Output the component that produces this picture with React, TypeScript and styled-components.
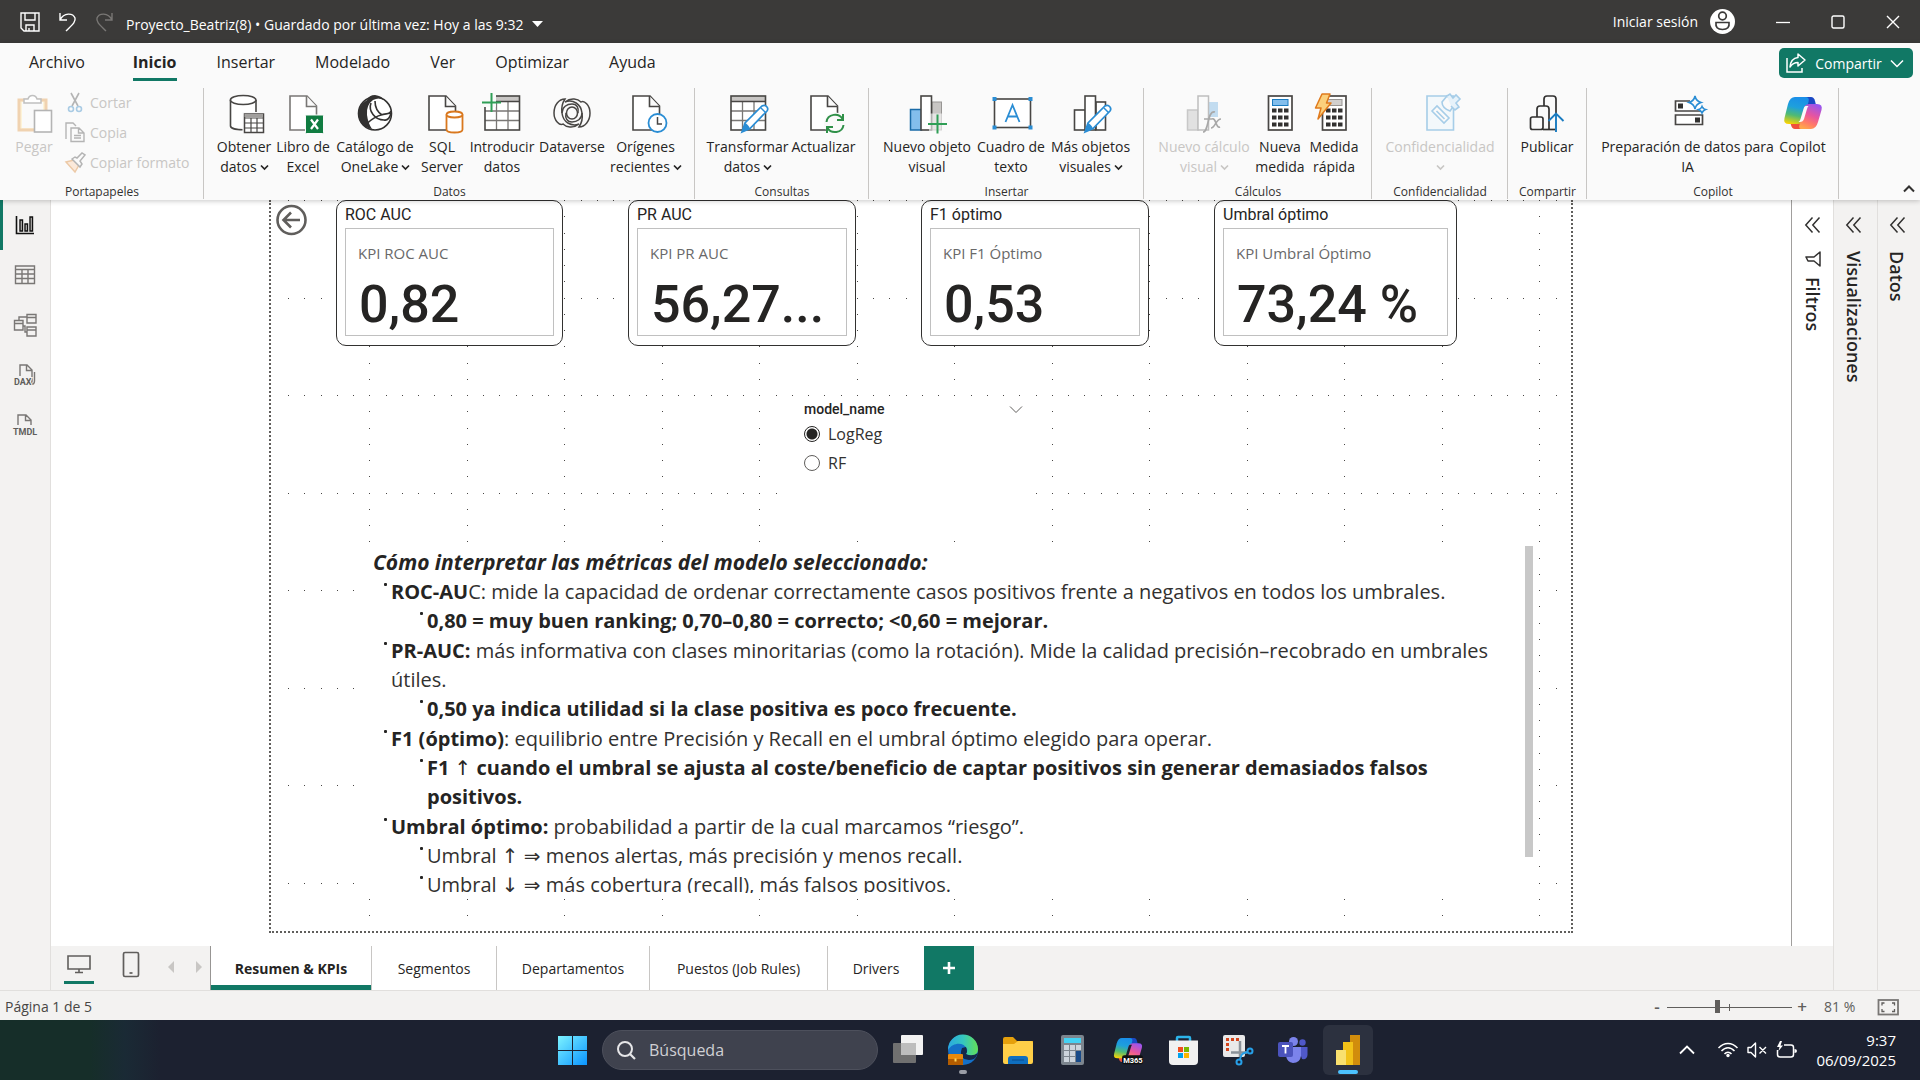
import React from "react";
import styled, { createGlobalStyle, css } from "styled-components";

const ui = `"Open Sans", "Noto Sans", "DejaVu Sans", sans-serif`;
const din = `Roboto, "Liberation Sans", sans-serif`;
const green = "#117865";

const Global = createGlobalStyle`
  *, *::before, *::after { box-sizing: border-box; }
  body { margin: 0; background: #fff; color: #252423; font-family: ${ui}; font-size: 14px; }
  button { font: inherit; color: inherit; background: none; border: 0; padding: 0; margin: 0; }
  svg { display: block; overflow: visible; flex: none; }
`;

const Shell = styled.div`
  min-height: 100vh;
  display: grid;
  grid-template-columns: minmax(0, 1fr);
  grid-template-rows: auto auto 1fr auto auto;
  overflow: hidden;
`;

/* ---------- title bar ---------- */
const TitleBar = styled.header`
  height: 43px;
  background: #3b3a39;
  color: #fff;
  display: flex;
  align-items: center;
  justify-content: space-between;
  padding: 0 20px;
`;
const TitleSide = styled.div<{ $gap: number }>`
  display: flex;
  align-items: center;
  gap: ${(p) => p.$gap}px;
`;
const FileName = styled.button`
  display: flex;
  align-items: center;
  gap: 9px;
  padding-top: 5px;
  white-space: nowrap;
`;
const SignIn = styled.button`
  display: flex;
  align-items: center;
  gap: 12px;
  white-space: nowrap;
`;

/* ---------- ribbon ---------- */
const Ribbon = styled.section`
  background: #fafafa;
  position: relative;
  z-index: 3;
  box-shadow: 0 1px 5px rgba(0, 0, 0, 0.22);
`;
const MenuRow = styled.nav`
  height: 45px;
  display: flex;
  justify-content: space-between;
  align-items: flex-start;
  padding: 0 7px 0 9px;
`;
const MenuTabs = styled.div`
  display: flex;
`;
const MenuTab = styled.button<{ $active?: boolean }>`
  height: 38px;
  padding: 0 20px;
  font-size: 16px;
  line-height: 22px;
  color: #252423;
  ${(p) =>
    p.$active &&
    css`
      font-weight: 700;
      margin-left: 8px;
      &::before {
        content: "";
        display: block;
        height: 8px;
      }
      &::after {
        content: "";
        display: block;
        height: 3px;
        margin: 5px 0 0;
        background: ${green};
      }
    `}
`;
const ShareButton = styled.button`
  height: 30px;
  width: 134px;
  margin-top: 5px;
  border-radius: 5px;
  background: ${green};
  color: #fff;
  display: flex;
  align-items: center;
  justify-content: space-between;
  padding: 0 10px 0 7px;
  font-size: 14px;
`;
const GroupsRow = styled.div`
  display: flex;
  height: 112px;
`;
const Group = styled.section`
  height: 111px;
  display: flex;
  flex-direction: column;
  justify-content: space-between;
  padding: 5px 10px 0 11px;
  border-right: 1px solid #c8c6c4;
`;
const GroupItems = styled.div`
  display: flex;
  align-items: flex-start;
`;
const GroupName = styled.div`
  font-size: 12px;
  line-height: 14px;
  text-align: center;
  color: #323130;
`;
const BigButton = styled.button<{ $w: number; $off?: boolean }>`
  width: ${(p) => p.$w}px;
  display: flex;
  flex-direction: column;
  align-items: center;
  gap: 4px;
  font-size: 14px;
  line-height: 20px;
  white-space: nowrap;
  color: ${(p) => (p.$off ? "#c8c6c4" : "#252423")};
`;
const LabelLine = styled.span`
  display: flex;
  align-items: center;
  justify-content: center;
  gap: 4px;
  height: 20px;
`;
const Labels = styled.span`
  display: block;
`;
const SmallList = styled.div`
  display: flex;
  flex-direction: column;
  width: 128px;
  margin: -6px 0 0 8px;
`;
const SmallButton = styled.button`
  height: 30px;
  display: flex;
  align-items: center;
  gap: 4px;
  color: #c8c6c4;
  white-space: nowrap;
`;
const CollapseCell = styled.div`
  flex: 1;
  display: flex;
  justify-content: flex-end;
  align-items: flex-end;
  padding: 0 6px 8px 0;
`;

/* ---------- workspace ---------- */
const Workspace = styled.main`
  display: flex;
  min-height: 0;
`;
const Rail = styled.nav`
  width: 51px;
  background: #f3f2f1;
  border-right: 1px solid #e1dfdd;
  display: flex;
  flex-direction: column;
`;
const RailButton = styled.button<{ $active?: boolean }>`
  height: 50px;
  display: grid;
  place-items: center;
  border-left: 3px solid ${(p) => (p.$active ? green : "transparent")};
  padding-right: 3px;
`;
const Center = styled.div`
  flex: 1;
  min-width: 0;
  display: flex;
  flex-direction: column;
`;
const CanvasRow = styled.div`
  flex: 1;
  display: flex;
`;
const CanvasArea = styled.div`
  flex: 1;
  min-width: 0;
  display: flex;
  justify-content: center;
  align-items: flex-start;
  overflow: hidden;
`;
const Pane = styled.aside<{ $w: number; $docked?: boolean }>`
  width: ${(p) => p.$w}px;
  border-left: 1px solid ${(p) => (p.$docked ? "#e1dfdd" : "#a19f9d")};
  background: ${(p) => (p.$docked ? "#f3f2f1" : "#fff")};
  display: flex;
  flex-direction: column;
  align-items: center;
  padding: 17px ${(p) => (p.$docked ? 4 : 0)}px 0 0;
  gap: 18px;
`;
const PaneHead = styled.div`
  display: flex;
  flex-direction: column;
  align-items: center;
  gap: 10px;
`;
const PaneTitle = styled.h2`
  margin: 0;
  writing-mode: vertical-rl;
  font-size: 18px;
  line-height: 24px;
  font-weight: 600;
  color: #252423;
`;

/* ---------- report page ---------- */
const Page = styled.article`
  position: relative;
  flex: none;
  width: 1304px;
  height: 733px;
  border: 2px dotted #605e5c;
  border-top: 0;
  background: #fff;
`;
const DotGrid = styled.svg`
  position: absolute;
  left: 0;
  top: 0;
`;
const PageBody = styled.div`
  position: relative;
`;
const CardsRow = styled.div`
  display: flex;
  align-items: flex-start;
  gap: 65px;
  padding-left: 5px;
`;
const BackButton = styled.button`
  margin: 4px -36px 0 0;
`;
const Card = styled.section<{ $w: number }>`
  width: ${(p) => p.$w}px;
  height: 146px;
  border: 1px solid #323130;
  border-radius: 10px;
  background: #fff;
  padding: 3px 8px 9px;
  display: flex;
  flex-direction: column;
`;
const CardTitle = styled.h3`
  margin: 0;
  font: 400 16px/22px ${din};
  padding-bottom: 2px;
`;
const CardInner = styled.div`
  flex: 1;
  border: 1px solid #c0c0c0;
  padding: 14px 12px 0;
`;
const CardLabel = styled.div`
  font-size: 15px;
  line-height: 20px;
  color: #696969;
`;
const CardValue = styled.div`
  font: 500 52px/60px ${din};
  padding: 12px 0 0 1px;
  color: #252423;
  white-space: nowrap;
`;
const Slicer = styled.fieldset`
  margin: 50px 0 0 509px;
  width: 254px;
  height: 145px;
  border: 0;
  background: #fff;
  padding: 3px 12px 0 24px;
  min-width: 0;
`;
const SlicerHead = styled.div`
  display: flex;
  justify-content: space-between;
  align-items: center;
  font: 500 14px/20px ${din};
`;
const Option = styled.label`
  display: flex;
  align-items: center;
  gap: 8px;
  height: 29px;
  font-size: 16px;
  color: #323130;
`;
const Radio = styled.input`
  appearance: none;
  width: 16px;
  height: 16px;
  margin: 0;
  border: 1px solid #605e5c;
  border-radius: 50%;
  background: #fff;
  &:checked {
    border-color: #252423;
    background: radial-gradient(circle, #252423 5px, #fff 6px);
  }
`;
const TextVisual = styled.section`
  display: flex;
  justify-content: space-between;
  margin: 1px 0 0 91px;
  width: 1174px;
  height: 355px;
  background: #fff;
  padding: 4px 3px 4px 11px;
`;
const TextClip = styled.div`
  flex: 1;
  height: 347px;
  overflow: hidden;
  font-size: 20px;
  line-height: 29px;
  color: #323130;
  b { color: #252423; }
`;
const Thin = styled.span`
  font-weight: 400;
`;
const TextHeading = styled.h3`
  margin: 0;
  padding-top: 2px;
  font-size: 21px;
  line-height: 29px;
  font-style: italic;
  font-weight: 700;
  color: #252423;
`;
const Bullets = styled.ul<{ $nested?: boolean }>`
  list-style: none;
  margin: 0;
  padding: ${(p) => (p.$nested ? "0 0 1px 36px" : "0 0 0 11px")};
`;
const Bullet = styled.li`
  display: grid;
  grid-template-columns: 7px minmax(0, 1fr);
  &::before {
    content: "";
    width: 3px;
    height: 3px;
    margin-top: 6px;
    border-radius: 1px;
    background: #252423;
  }
`;
const ScrollThumb = styled.div`
  width: 8px;
  height: 311px;
  background: #c8c8c8;
`;

/* ---------- page tabs ---------- */
const PageTabs = styled.nav`
  height: 44px;
  background: #f3f2f1;
  display: flex;
`;
const ViewSwitch = styled.div`
  width: 159px;
  display: flex;
  align-items: flex-start;
  padding: 5px 8px 0 13px;
  justify-content: space-between;
`;
const ViewButton = styled.button<{ $active?: boolean }>`
  width: 30px;
  height: 33px;
  display: flex;
  justify-content: center;
  border-bottom: 3px solid ${(p) => (p.$active ? green : "transparent")};
`;
const Arrow = styled.button`
  padding-top: 10px;
`;
const PageTab = styled.button<{ $w: number; $active?: boolean }>`
  width: ${(p) => p.$w}px;
  background: #fff;
  border-left: 1px solid ${(p) => (p.$active ? "#979593" : "#c8c6c4")};
  font-size: 14px;
  font-weight: ${(p) => (p.$active ? 700 : 400)};
  box-shadow: ${(p) => (p.$active ? `inset 0 -5px 0 ${green}` : "none")};
  white-space: nowrap;
`;
const AddTab = styled.button`
  width: 50px;
  background: ${green};
  display: grid;
  place-items: center;
`;

/* ---------- status bar ---------- */
const StatusBar = styled.footer`
  height: 30px;
  background: #f3f2f1;
  border-top: 1px solid #e1dfdd;
  display: flex;
  justify-content: space-between;
  align-items: center;
  padding: 2px 22px 0 5px;
  color: #484644;
`;
const ZoomBox = styled.div`
  display: flex;
  align-items: center;
  color: #605e5c;
`;
const ZoomStep = styled.button`
  width: 20px;
  font-size: 17px;
  line-height: 20px;
  font-weight: 600;
`;
const ZoomRange = styled.input`
  appearance: none;
  width: 125px;
  height: 14px;
  margin: 0;
  background:
    linear-gradient(#605e5c, #605e5c) 62px 4px / 1px 7px no-repeat,
    linear-gradient(#605e5c, #605e5c) 0 7px / 100% 1px no-repeat;
  &::-webkit-slider-thumb {
    appearance: none;
    width: 5px;
    height: 13px;
    background: #605e5c;
  }
`;
const ZoomText = styled.span`
  width: 56px;
  padding: 0 0 1px 12px;
  white-space: nowrap;
`;
const FitButton = styled.button`
  margin-left: 10px;
`;

/* ---------- taskbar ---------- */
const Taskbar = styled.footer`
  height: 60px;
  background: linear-gradient(90deg, #162e29 0, #162e29 90px, #1a2a35 125px, #1c2130 160px, #1c2130 100%);
  display: grid;
  grid-template-columns: 1fr auto 1fr;
  align-items: center;
  color: #fff;
`;
const Dock = styled.div`
  grid-column: 2;
  display: flex;
  align-items: center;
  gap: 5px;
`;
const DockButton = styled.button<{ $active?: boolean }>`
  width: 50px;
  height: 50px;
  border-radius: 6px;
  display: grid;
  place-items: center;
  background: ${(p) => (p.$active ? "#2c313f" : "none")};
`;
const DockMark = styled.span<{ $w: number; $c: string }>`
  width: ${(p) => p.$w}px;
  height: 4px;
  margin-bottom: -8px;
  border-radius: 2px;
  background: ${(p) => p.$c};
`;
const DockStack = styled.span`
  display: flex;
  flex-direction: column;
  align-items: center;
  gap: 5px;
`;
const SearchBox = styled.label`
  width: 276px;
  height: 40px;
  border-radius: 20px;
  border: 1px solid #4d505c;
  background: #3f424e;
  display: flex;
  align-items: center;
  gap: 14px;
  padding: 0 14px;
`;
const SearchInput = styled.input`
  flex: 1;
  min-width: 0;
  border: 0;
  outline: 0;
  background: none;
  font: 400 16px/22px ${ui};
  color: #fff;
  padding: 0;
  &::placeholder { color: #d0d0d4; opacity: 1; }
`;
const Tray = styled.div`
  display: flex;
  align-items: center;
  justify-content: flex-end;
  padding-right: 24px;
`;
const TrayIcons = styled.div`
  display: flex;
  align-items: center;
  gap: 9px;
  margin: 0 19px 0 24px;
`;
const Clock = styled.div`
  font-size: 15px;
  line-height: 20px;
  text-align: right;
`;

/* ---------- icons ---------- */
const ink = "#484644";
const blue = "#2a8dd4";

const Svg = ({ s = 40, h, children }: { s?: number; h?: number; children: React.ReactNode }) => (
  <svg width={s} height={h ?? s} viewBox={`0 0 ${s} ${h ?? s}`} fill="none" aria-hidden="true">
    {children}
  </svg>
);
const Doc = ({ c = ink }: { c?: string }) => (
  <>
    <path d="M7 3H24L33.500 13V37H7Z" fill="#fff" stroke={c} strokeWidth="1.600" />
    <path d="M23.500 3V13.500H33.500" fill="#fafafa" stroke={c} strokeWidth="1.600" />
  </>
);
const Table = () => (
  <>
    <rect x="3" y="3" width="34.500" height="34" fill="#fff" />
    <rect x="3" y="3" width="34.500" height="5.500" fill="#c8c6c4" />
    <path d="M3 18H37M3 27.500H37M14.500 9V37M26 9V37" stroke="#797775" strokeWidth="1.300" />
    <rect x="3" y="3" width="34.500" height="34" stroke={ink} strokeWidth="1.600" />
    <path d="M3 8.500H37" stroke={ink} strokeWidth="1.300" />
  </>
);
const Pencil = () => (
  <>
    <path d="M14 39L17 30L34 13Q37 11.500 39 14Q40.500 16 39 18L22 35.500Z" fill="#fff" stroke={blue} strokeWidth="1.700" />
    <path d="M14 39L17 30Q20 31 22 35.500Z" fill={blue} />
    <path d="M33 15L37.500 19.500" stroke={blue} strokeWidth="1.500" />
  </>
);
const Plus = ({ x, y }: { x: number; y: number }) => (
  <path d={`M${x - 9.5} ${y}H${x + 9.5}M${x} ${y - 9.5}V${y + 9.5}`} stroke="#2f9e56" strokeWidth="2" />
);
const Calc = ({ top = "#83beec" }: { top?: string }) => (
  <>
    <rect x="8.500" y="3" width="23.500" height="34" fill="#fff" stroke={ink} strokeWidth="1.700" />
    <rect x="12.500" y="6.500" width="15.500" height="6" fill={top} stroke={top === "#83beec" ? "#1a7bc0" : "#979593"} />
    {[15.5, 22.5, 29.5].map((y) =>
      [12, 18, 24].map((cx) => <rect key={`${cx}-${y}`} x={cx} y={y} width="4.500" height="4" fill="#323130" />)
    )}
  </>
);

const Copilot = ({ id, hole }: { id: string; hole: string }) => (
  <>
    <defs>
      <linearGradient id={`${id}a`} x1="0.400" y1="0" x2="0.200" y2="1">
        <stop offset="0" stopColor="#1a8fe8" />
        <stop offset="0.350" stopColor="#1ea0dc" />
        <stop offset="0.650" stopColor="#4fba74" />
        <stop offset="1" stopColor="#ffd400" />
      </linearGradient>
      <linearGradient id={`${id}b`} x1="0.700" y1="0" x2="0.300" y2="1">
        <stop offset="0" stopColor="#9a55ee" />
        <stop offset="0.450" stopColor="#e8559e" />
        <stop offset="0.750" stopColor="#ff7a68" />
        <stop offset="1" stopColor="#ffa54c" />
      </linearGradient>
    </defs>
    <path d="M20 4H28Q31 4 32 8L33.500 14H25Z" fill="#1b49c4" />
    <path d="M20 36H12Q9 36 8 32L6.500 27H15Z" fill="#f0503c" />
    <path d="M12 4H22Q27 4 25.500 9L20 27Q18.500 31 14 31H6Q0 31 1.500 25L5 11Q7 4 12 4Z" fill={`url(#${id}a)`} />
    <path d="M28 36H18Q15 36 17 30L21 15Q22 11 27 11H34Q40 11 38.500 17L35 29Q33 36 28 36Z" fill={`url(#${id}b)`} />
    <path d="M22.500 13H25.500Q24.500 14 24 16L21 26Q20 29 17 29H15.500Q17 28 17.500 26L20.500 16Q21 13.500 22.500 13Z" fill={hole} />
  </>
);

const Icons = {
  get: (
    <Svg>
      <path d="M6.500 7V33C6.500 38 32 38 32 33V7" fill="#fff" stroke={ink} strokeWidth="1.600" />
      <ellipse cx="19.200" cy="7" rx="12.800" ry="4.500" fill="#fff" stroke={ink} strokeWidth="1.600" />
      <rect x="18.500" y="19" width="23" height="22" fill="#fafafa" />
      <rect x="20.500" y="21" width="19" height="18.500" fill="#fff" stroke={ink} strokeWidth="1.500" />
      <path d="M20.500 22.500H39" stroke="#a19f9d" strokeWidth="3" />
      <path d="M20.500 25H39M20.500 30H39M20.500 35H39M27 25V39M33 25V39" stroke={ink} strokeWidth="1.200" />
    </Svg>
  ),
  excel: (
    <Svg>
      <Doc c="#797775" />
      <rect x="22.500" y="22" width="18" height="18.500" rx="1" fill="#107c41" stroke="#fafafa" />
      <path d="M28 26.500L35 36M35 26.500L28 36" stroke="#fff" strokeWidth="2.200" />
    </Svg>
  ),
  lake: (
    <Svg>
      <circle cx="20" cy="20.500" r="16.500" fill="#fff" stroke="#323130" strokeWidth="1.600" />
      <path d="M12 7Q14 2 20 2Q27 3 29 7Q24 4 18 7Q11 12 12 22Q13 30 17 36Q4 34 3.500 21Q3.500 12 12 7Z" fill="#323130" />
      <path d="M16 10C13 18 20 27 29 27C33 28 35 24 36 20M9 33C15 28 18 24 26 22C31 20 35 22 36 18M20 8C20 15 24 20 27 22" stroke="#323130" strokeWidth="1.600" />
    </Svg>
  ),
  sql: (
    <Svg>
      <Doc />
      <path d="M24.500 21.500V36.500C24.500 40.500 40.500 40.500 40.500 36.500V21.500" fill="#fff" stroke="#d9781e" strokeWidth="1.800" />
      <ellipse cx="32.500" cy="21.500" rx="8" ry="3" fill="#fff" stroke="#d9781e" strokeWidth="1.800" />
    </Svg>
  ),
  enter: (
    <Svg>
      <Table />
      <path d="M0 0H14V14H0Z" fill="#fafafa" />
      <Plus x={9.5} y={9.5} />
    </Svg>
  ),
  verse: (
    <Svg>
      <g stroke={ink} strokeWidth="1.500">
        <ellipse cx="20" cy="20" rx="5.500" ry="6" />
        <path d="M2 20C2 12 7 6 13 6C11 9 9 14 10 20C11 29 19 34 27 31C21 36 14 34 11 31C8 33 2 28 2 20Z" />
        <path d="M38 20C38 28 33 34 27 34C29 31 31 26 30 20C29 11 21 6 13 9C19 4 26 6 29 9C32 7 38 12 38 20Z" />
        <path d="M10 20C10 14 15 11 20 11C25 11 27 15 26 20M30 20C30 26 25 29 20 29C15 29 13 25 14 20" />
      </g>
    </Svg>
  ),
  recent: (
    <Svg>
      <Doc />
      <circle cx="31.500" cy="30" r="9" fill="#fff" stroke={blue} strokeWidth="1.800" />
      <path d="M31.500 24V31H36" stroke={ink} strokeWidth="1.500" />
    </Svg>
  ),
  transform: (
    <Svg>
      <Table />
      <Pencil />
    </Svg>
  ),
  refresh: (
    <Svg>
      <Doc />
      <circle cx="31" cy="30.500" r="11" fill="#fafafa" />
      <g stroke="#2f9048" strokeWidth="2">
        <path d="M22.500 29C23.500 20.500 35 19.500 38.500 26M39 21V27H33" />
        <path d="M39.500 32C38.500 40.500 27 41 23.500 35M23 40V34H29" />
      </g>
    </Svg>
  ),
  visual: (
    <Svg>
      <rect x="25" y="9" width="9.500" height="28" fill="#c8c6c4" stroke="#979593" />
      <rect x="3.500" y="16.500" width="11" height="20.500" fill="#83beec" stroke="#1a6ba8" strokeWidth="1.500" />
      <rect x="14" y="3" width="10.500" height="34" fill="#fff" stroke={ink} strokeWidth="1.600" />
      <rect x="22" y="20.500" width="18" height="18" fill="#fafafa" opacity="0.600" />
      <Plus x={30.5} y={31} />
    </Svg>
  ),
  textbox: (
    <Svg>
      <rect x="3.500" y="6" width="36" height="28.500" fill="#fff" stroke={ink} strokeWidth="1.600" />
      {[[3.5, 6], [39.5, 6], [3.5, 34.5], [39.5, 34.5]].map(([x, y]) => (
        <rect key={`${x}-${y}`} x={x - 2} y={y - 2} width="4" height="4" fill={blue} />
      ))}
      <path d="M14.500 29L21.500 12L28.500 29M17 23.500H26" stroke={blue} strokeWidth="1.800" />
    </Svg>
  ),
  more: (
    <Svg>
      <rect x="25" y="9" width="9.500" height="28" fill="#fff" stroke={ink} strokeWidth="1.600" />
      <rect x="3.500" y="17" width="11" height="20" fill="#fff" stroke={ink} strokeWidth="1.600" />
      <rect x="14" y="3" width="10.500" height="34" fill="#fff" stroke={ink} strokeWidth="1.600" />
      <Pencil />
    </Svg>
  ),
  newCalc: (
    <Svg>
      <rect x="24" y="9" width="10" height="15" fill="#c2dcf0" />
      <rect x="3.500" y="17" width="10.500" height="20" fill="#e1e1e1" stroke="#c8c8c8" strokeWidth="1.500" />
      <rect x="14" y="3" width="10.500" height="34" fill="#fafafa" stroke="#bebebe" strokeWidth="1.500" />
      <path d="M19 39C25 39 23 17 31 19M20 26H28M28 26C32 24 32 36 36 34M37 26C32 26 31 35 27 35" stroke="#a8a8a8" strokeWidth="1.700" />
    </Svg>
  ),
  measure: (
    <Svg>
      <Calc />
    </Svg>
  ),
  quick: (
    <Svg>
      <Calc top="#d2d0ce" />
      <path d="M8 1H16L12.500 10H17L4 26L7 15H1.500Z" fill="#fbd07c" stroke="#e07a1c" strokeWidth="1.500" strokeLinejoin="round" />
    </Svg>
  ),
  label: (
    <Svg>
      <g stroke="#a6cde8" strokeWidth="1.600">
        <path d="M7 3H33.500V37H7Z" fill="#f3f8fb" />
        <path d="M12 18L17 13L29 25L24 30ZM16.500 18L24.500 26" fill="#fafafa" />
        <path d="M22 9L27 3L35 11L30 18Q22 15 22 9Z" fill="#fafafa" />
        <path d="M27 3L30 1L33 5L36 2L40 6L36 10L39 14L35 17L31 13" fill="#e6f2fa" />
      </g>
    </Svg>
  ),
  publish: (
    <Svg>
      <g stroke="#323130" strokeWidth="1.700" fill="#fafafa">
        <path d="M17 13V6Q17 3 20 3H26Q29 3 29 6V20" />
        <path d="M10 24V16Q10 13 13 13H19Q22 13 22 16V36" />
        <rect x="3.500" y="24" width="12.500" height="12.500" rx="2" />
        <path d="M16 36.500H28" />
      </g>
      <path d="M29 39V21M21.500 28L29 20.500L36.500 28" stroke="#1a7bc0" strokeWidth="1.900" />
    </Svg>
  ),
  prep: (
    <Svg>
      <path d="M22 8H7.500V18H34.500V14M7.500 22H34.500V31.500H7.500Z" fill="#fff" stroke={ink} strokeWidth="1.700" />
      <rect x="10" y="10.500" width="5" height="5" fill="#323130" />
      <rect x="27" y="24.500" width="5" height="5" fill="#323130" />
      <path d="M27 3Q28 8 33 9.500Q28 11 27 16Q26 11 21 9.500Q26 8 27 3ZM34 13.500Q35 16 37.500 16.500Q35 17.500 34 20Q33 17.500 30.500 16.500Q33 16 34 13.500Z" fill="#fafafa" stroke="#2a8dd4" strokeWidth="1.600" />
    </Svg>
  ),
  copilot: (
    <Svg>
      <Copilot id="rib" hole="#fafafa" />
    </Svg>
  ),
  paste: (
    <Svg>
      <path d="M5 7H32V37H5Z" fill="#fdf3d8" stroke="#f0d2b0" strokeWidth="3" />
      <rect x="8" y="9" width="21" height="26" fill="#fafafa" />
      <path d="M10 10V6H14Q15 2.500 18.500 2.500Q22 2.500 23 6H27V10Z" fill="#fff" stroke="#c0c0c0" strokeWidth="1.500" />
      <rect x="20.500" y="17.500" width="17" height="21.500" fill="#fff" stroke="#b4b4b4" strokeWidth="1.600" />
    </Svg>
  ),
  cut: (
    <Svg s={21}>
      <path d="M6 1L13 14M14 1L7 14" stroke="#b4b4b4" strokeWidth="1.600" />
      <circle cx="6" cy="17" r="2.500" stroke="#a9cbe4" strokeWidth="1.600" />
      <circle cx="14" cy="17" r="2.500" stroke="#a9cbe4" strokeWidth="1.600" />
    </Svg>
  ),
  copy: (
    <Svg s={21}>
      <path d="M1 17V1H8L11 4M6 19.500V6H14L19 11V19.500ZM13.500 6V11H19M9 13.500H16M9 16H16" fill="#fafafa" stroke="#b4b4b4" strokeWidth="1.400" />
    </Svg>
  ),
  brush: (
    <Svg s={21}>
      <path d="M1 10L9 8L14 13L10 20Z" fill="#fbe9da" stroke="#ecc9a6" strokeWidth="1.500" />
      <path d="M7 7L15 15L17 12L15 9L20 3L17 1L12 6L10 5Z" fill="#fafafa" stroke="#b4b4b4" strokeWidth="1.500" />
    </Svg>
  ),
};

const Chevron = ({ w = 7, c = "currentColor", t = 1.7, up = false }: { w?: number; c?: string; t?: number; up?: boolean }) => (
  <svg width={w} height={w / 2 + 1} viewBox={`0 0 ${w} ${w / 2 + 1}`} fill="none" aria-hidden="true">
    <path d={up ? `M0 ${w / 2 + 0.5}L${w / 2} 0.5L${w} ${w / 2 + 0.5}` : `M0 0.5L${w / 2} ${w / 2 + 0.5}L${w} 0.5`} stroke={c} strokeWidth={t} />
  </svg>
);

const DoubleChevron = () => (
  <Svg s={15} h={16}>
    <path d="M7.500 0.500L0.800 8L7.500 15.500M14.500 0.500L7.800 8L14.500 15.500" stroke="#323130" strokeWidth="1.500" />
  </Svg>
);

type Item = { icon: React.ReactNode; lines: string[]; w: number; menu?: boolean; off?: boolean };
const groups: { name: string; items: Item[] }[] = [
  {
    name: "Datos",
    items: [
      { icon: Icons.get, lines: ["Obtener", "datos"], w: 58, menu: true },
      { icon: Icons.excel, lines: ["Libro de", "Excel"], w: 60 },
      { icon: Icons.lake, lines: ["Catálogo de", "OneLake"], w: 84, menu: true },
      { icon: Icons.sql, lines: ["SQL", "Server"], w: 50 },
      { icon: Icons.enter, lines: ["Introducir", "datos"], w: 70 },
      { icon: Icons.verse, lines: ["Dataverse"], w: 70 },
      { icon: Icons.recent, lines: ["Orígenes", "recientes"], w: 77, menu: true },
    ],
  },
  {
    name: "Consultas",
    items: [
      { icon: Icons.transform, lines: ["Transformar", "datos"], w: 83, menu: true },
      { icon: Icons.refresh, lines: ["Actualizar"], w: 69 },
    ],
  },
  {
    name: "Insertar",
    items: [
      { icon: Icons.visual, lines: ["Nuevo objeto", "visual"], w: 94 },
      { icon: Icons.textbox, lines: ["Cuadro de", "texto"], w: 74 },
      { icon: Icons.more, lines: ["Más objetos", "visuales"], w: 85, menu: true },
    ],
  },
  {
    name: "Cálculos",
    items: [
      { icon: Icons.newCalc, lines: ["Nuevo cálculo", "visual"], w: 98, menu: true, off: true },
      { icon: Icons.measure, lines: ["Nueva", "medida"], w: 54 },
      { icon: Icons.quick, lines: ["Medida", "rápida"], w: 54 },
    ],
  },
  { name: "Confidencialidad", items: [{ icon: Icons.label, lines: ["Confidencialidad", ""], w: 114, menu: true, off: true }] },
  { name: "Compartir", items: [{ icon: Icons.publish, lines: ["Publicar"], w: 56 }] },
  {
    name: "Copilot",
    items: [
      { icon: Icons.prep, lines: ["Preparación de datos para", "IA"], w: 179 },
      { icon: Icons.copilot, lines: ["Copilot"], w: 51 },
    ],
  },
];

function RibbonButton({ item }: { item: Item }) {
  const last = item.lines.length - 1;
  return (
    <BigButton $w={item.w} $off={item.off} disabled={item.off}>
      {item.icon}
      <Labels>
        {item.lines.map((line, i) => (
          <LabelLine key={i}>
            {line}
            {item.menu && i === last && <Chevron />}
          </LabelLine>
        ))}
      </Labels>
    </BigButton>
  );
}

function GridDots() {
  const step = 16.25;
  const dots: React.ReactNode[] = [];
  for (let r = 0; r <= 44; r++) {
    for (let c = 0; c <= 78; c++) {
      const onRow = r % 6 === 0;
      const onColumn = c % 6 === 5;
      if (!onRow && !onColumn) continue;
      dots.push(
        <rect key={`${r}-${c}`} x={Math.round(17 + c * step)} y={Math.round(r * step)} width="1" height="1" />
      );
    }
  }
  return (
    <DotGrid width="1300" height="731" fill="#484644" aria-hidden="true">
      {dots}
    </DotGrid>
  );
}

const cards = [
  { title: "ROC AUC", label: "KPI ROC AUC", value: "0,82", w: 227 },
  { title: "PR AUC", label: "KPI PR AUC", value: "56,27...", w: 228 },
  { title: "F1 óptimo", label: "KPI F1 Óptimo", value: "0,53", w: 228 },
  { title: "Umbral óptimo", label: "KPI Umbral Óptimo", value: "73,24 %", w: 243 },
];

const railIcons = [
  {
    name: "Vista de informe",
    icon: (
      <Svg s={20}>
        <path d="M1.500 1V18.500H19" stroke="#111" strokeWidth="1.600" />
        <path d="M5 16V5H7.500V16ZM10 16V9H12.500V16ZM15 16V2H17.500V16Z" fill="#c8c6c4" stroke="#111" strokeWidth="1.400" />
      </Svg>
    ),
  },
  {
    name: "Vista de tabla",
    icon: (
      <Svg s={20}>
        <path d="M0.500 1H19.500V18.500H0.500ZM0.500 4.500H19.500M0.500 9H19.500M0.500 13.500H19.500M7 4.500V18.500M13 4.500V18.500" stroke="#797775" strokeWidth="1.400" />
      </Svg>
    ),
  },
  {
    name: "Vista de modelo",
    icon: (
      <Svg s={22}>
        <path d="M0.500 6.500H9V16H0.500ZM0.500 9.500H9M13 0.500H22V9H13ZM13 3.500H22M13 13H22V22H13ZM13 16H22M5 6.500V3H13M9 12H11V18H13" stroke="#797775" strokeWidth="1.400" />
      </Svg>
    ),
  },
  {
    name: "Vista de consultas DAX",
    icon: (
      <Svg s={22}>
        <path d="M6 12V1H13L18 6V17Q18 19 16 19M12.500 1V6.500H18M20.500 8V17Q20.500 20.500 17 20.500" stroke="#797775" strokeWidth="1.400" />
        <text x="0" y="20.500" fontFamily={din} fontSize="9" fontWeight="700" fill="#605e5c" stroke="#f3f2f1" strokeWidth="2" paintOrder="stroke">DAX</text>
      </Svg>
    ),
  },
  {
    name: "Vista TMDL",
    icon: (
      <Svg s={24} h={22}>
        <path d="M5 11V1H13L18 6V11M12.500 1V6.500H18" stroke="#797775" strokeWidth="1.400" />
        <text x="0" y="20.500" fontFamily={din} fontSize="9" fontWeight="700" fill="#605e5c">TMDL</text>
      </Svg>
    ),
  },
];

const dock: { name: string; icon: React.ReactNode; mark?: [number, string]; active?: boolean }[] = [
  {
    name: "Vista de tareas",
    icon: (
      <Svg s={30}>
        <rect x="0" y="8" width="23" height="20" rx="1" fill="#707070" />
        <rect x="8" y="0" width="22" height="20" rx="1" fill="#f2f2f2" />
        <rect x="8" y="8" width="15" height="12" fill="#bdbdbd" />
      </Svg>
    ),
  },
  {
    name: "Microsoft Edge",
    mark: [8, "#9a9da6"],
    icon: (
      <Svg s={30}>
        <defs>
          <linearGradient id="edgeTop" x1="0" y1="0.500" x2="1" y2="0.500">
            <stop offset="0" stopColor="#2aa8e0" />
            <stop offset="0.500" stopColor="#35c6c0" />
            <stop offset="1" stopColor="#63e056" />
          </linearGradient>
        </defs>
        <circle cx="15" cy="15" r="15" fill="#1470c8" />
        <path d="M0 15A15 15 0 0 1 30 14C30 20 25 22 19 20C17 18 20 17 19 14C16 7 5 7 0 15Z" fill="url(#edgeTop)" />
        <path d="M14 13Q10 24 21 25Q26 25 28 22L30 18Q24 22 18 19Q20 17 18 12Z" fill="#15284a" />
        <rect x="0" y="19" width="15" height="11" rx="1" fill="#e8890c" />
        <path d="M0 24H15V29Q15 30 14 30H1Q0 30 0 29Z" fill="#b35c00" />
        <rect x="6.500" y="23.500" width="2" height="3" fill="#ffd75e" />
      </Svg>
    ),
  },
  {
    name: "Explorador de archivos",
    icon: (
      <Svg s={30} h={28}>
        <path d="M0 3Q0 1 2 1H10L14 5H30V12H0Z" fill="#e5a00c" />
        <path d="M0 8H11L15 5H28Q30 5 30 7V26Q30 28 28 28H2Q0 28 0 26Z" fill="#ffcf48" />
        <path d="M5 28V23Q5 20 8 20H22Q25 20 25 23V28Z" fill="#0f6fc0" />
        <path d="M9 24H21" stroke="#0a4c8c" />
      </Svg>
    ),
  },
  {
    name: "Calculadora",
    icon: (
      <Svg s={24} h={30}>
        <rect width="23" height="30" rx="2" fill="#7c858e" />
        <rect x="3" y="3" width="17" height="5" fill="#44d2f4" />
        {[10, 16, 22].map((y) => [3, 9, 15].map((x) => <rect key={`${x}-${y}`} x={x} y={y} width="5" height="5" fill="#ccd4dc" />))}
        <rect x="15" y="16" width="5" height="11" fill="#184a88" />
      </Svg>
    ),
  },
  {
    name: "Microsoft 365 Copilot",
    icon: (
      <svg width="30" height="30" viewBox="0 0 40 40" aria-hidden="true">
        <Copilot id="dock" hole="#1c2130" />
        <rect x="12" y="27" width="28" height="12" rx="3" fill="#111" />
        <text x="13.500" y="37" fontFamily={din} fontSize="10" fontWeight="700" fill="#fff">M365</text>
      </svg>
    ),
  },
  {
    name: "Microsoft Store",
    icon: (
      <Svg s={29} h={30}>
        <path d="M8 7V3Q8 2 9 2H20Q21 2 21 3V7" stroke="#2cb4ea" strokeWidth="2.500" />
        <path d="M0 5.500H29V26Q29 30 25 30H4Q0 30 0 26Z" fill="#f1f1f1" />
        <path d="M9 12H14V17H9Z" fill="#f04e1f" />
        <path d="M15 12H20V17H15Z" fill="#7ab800" />
        <path d="M9 18H14V23H9Z" fill="#00a2ed" />
        <path d="M15 18H20V23H15Z" fill="#fdb600" />
      </Svg>
    ),
  },
  {
    name: "Recortes",
    icon: (
      <Svg s={30}>
        <rect width="22" height="22" rx="2" fill="#e9e9e9" />
        <path d="M4.500 16V4.500H17" stroke="#d3441c" strokeWidth="3" strokeDasharray="3 2" />
        <path d="M17 6V22M8 17.500H24" stroke="#8b9299" strokeWidth="2.500" />
        <circle cx="16" cy="27" r="2.500" stroke="#27a0e8" strokeWidth="2" />
        <circle cx="27" cy="16" r="2.500" stroke="#27a0e8" strokeWidth="2" />
        <path d="M17 24L19 19M24 17L19 19" stroke="#27a0e8" strokeWidth="2" />
      </Svg>
    ),
  },
  {
    name: "Microsoft Teams",
    icon: (
      <Svg s={30}>
        <circle cx="24.500" cy="7.500" r="3.200" fill="#5059c9" />
        <path d="M20 12H29.500V20Q29 25 24 24Z" fill="#5059c9" />
        <circle cx="15.500" cy="6.500" r="4.500" fill="#7b83eb" />
        <path d="M8 12H23V21Q22 28 15 28Q9 27 8 21Z" fill="#7b83eb" />
        <rect x="0" y="7" width="15" height="15" rx="2" fill="#4b53bc" />
        <path d="M4 11H11M7.500 11V18.500" stroke="#fff" strokeWidth="1.800" />
      </Svg>
    ),
  },
  {
    name: "Power BI Desktop",
    active: true,
    mark: [20, "#4cc2ff"],
    icon: (
      <Svg s={24} h={30}>
        <path d="M14 0H24V30H14Z" fill="#d18d0c" />
        <path d="M7 7H17V30H7Z" fill="#f2c218" />
        <path d="M0 15H10V30H0Z" fill="#f9e06e" />
      </Svg>
    ),
  },
];

export default function App() {
  return (
    <Shell>
      <Global />
      <TitleBar>
        <TitleSide $gap={12}>
          <TitleSide $gap={18}>
            <button aria-label="Guardar">
              <Svg s={20}>
                <path d="M1 1H19V19H4L1 16ZM5 1V8H15V1M6 19V13H14V19M9 19V16" stroke="#fff" strokeWidth="1.400" />
              </Svg>
            </button>
            <button aria-label="Deshacer">
              <Svg s={20}>
                <path d="M2 1V8H9M2 8C6 0 15 1 17 6C18 10 14 13 8 19" stroke="#fff" strokeWidth="1.400" />
              </Svg>
            </button>
            <button aria-label="Rehacer">
              <Svg s={18} h={20}>
                <path d="M16 1V8H9M16 8C12 0 3 1 1 6C0 10 4 13 10 19" stroke="#797775" strokeWidth="1.400" />
              </Svg>
            </button>
          </TitleSide>
          <FileName>
            Proyecto_Beatriz(8) • Guardado por última vez: Hoy a las 9:32
            <Svg s={11} h={6}>
              <path d="M0 0H11L5.500 6Z" fill="#fff" />
            </Svg>
          </FileName>
        </TitleSide>
        <TitleSide $gap={41}>
          <SignIn>
            Iniciar sesión
            <Svg s={25}>
              <circle cx="12.500" cy="12.500" r="12.500" fill="#fff" />
              <circle cx="12.500" cy="7" r="3.800" stroke="#3b3a39" strokeWidth="1.700" />
              <path d="M6 13.500H19Q20 20.500 12.500 20.500Q5 20.500 6 13.500Z" stroke="#3b3a39" strokeWidth="1.700" />
            </Svg>
          </SignIn>
          <button aria-label="Minimizar">
            <Svg s={14}><path d="M0 7.500H14" stroke="#fff" strokeWidth="1.300" /></Svg>
          </button>
          <button aria-label="Maximizar">
            <Svg s={14}><rect x="1" y="1" width="12" height="12" rx="1.500" stroke="#fff" strokeWidth="1.400" /></Svg>
          </button>
          <button aria-label="Cerrar">
            <Svg s={14}><path d="M1 1L13 13M13 1L1 13" stroke="#fff" strokeWidth="1.400" /></Svg>
          </button>
        </TitleSide>
      </TitleBar>

      <Ribbon>
        <MenuRow>
          <MenuTabs>
            {["Archivo", "Inicio", "Insertar", "Modelado", "Ver", "Optimizar", "Ayuda"].map((t) => (
              <MenuTab key={t} $active={t === "Inicio"}>{t}</MenuTab>
            ))}
          </MenuTabs>
          <ShareButton>
            <Svg s={20}>
              <path d="M1 5V19H16V15" stroke="#fff" strokeWidth="1.500" />
              <path d="M12 1L19 7L12 13V9.500C8 9.500 6 11 4 14C4.500 8 8 5 12 4.500Z" stroke="#fff" strokeWidth="1.500" strokeLinejoin="round" />
            </Svg>
            Compartir
            <Chevron w={12} t={1.5} />
          </ShareButton>
        </MenuRow>
        <GroupsRow>
          <Group>
            <GroupItems>
              <BigButton $w={46} $off disabled>
                {Icons.paste}
                <LabelLine>Pegar</LabelLine>
              </BigButton>
              <SmallList>
                <SmallButton disabled>{Icons.cut}Cortar</SmallButton>
                <SmallButton disabled>{Icons.copy}Copia</SmallButton>
                <SmallButton disabled>{Icons.brush}Copiar formato</SmallButton>
              </SmallList>
            </GroupItems>
            <GroupName>Portapapeles</GroupName>
          </Group>
          {groups.map((g) => (
            <Group key={g.name}>
              <GroupItems>
                {g.items.map((it) => (
                  <RibbonButton key={it.lines[0]} item={it} />
                ))}
              </GroupItems>
              <GroupName>{g.name}</GroupName>
            </Group>
          ))}
          <CollapseCell>
            <button aria-label="Contraer la cinta"><Chevron w={10} t={2} up c="#323130" /></button>
          </CollapseCell>
        </GroupsRow>
      </Ribbon>

      <Workspace>
        <Rail>
          {railIcons.map((r, i) => (
            <RailButton key={r.name} aria-label={r.name} $active={i === 0}>{r.icon}</RailButton>
          ))}
        </Rail>
        <Center>
          <CanvasRow>
            <CanvasArea>
              <Page>
                <GridDots />
                <PageBody>
                  <CardsRow>
                    <BackButton aria-label="Atrás">
                      <Svg s={31}>
                        <circle cx="15.500" cy="16" r="14" stroke="#605e5c" strokeWidth="2.600" />
                        <path d="M24 16H8M15 8.500L7.500 16L15 23.500" stroke="#605e5c" strokeWidth="2.600" />
                      </Svg>
                    </BackButton>
                    {cards.map((c) => (
                      <Card key={c.title} $w={c.w}>
                        <CardTitle>{c.title}</CardTitle>
                        <CardInner>
                          <CardLabel>{c.label}</CardLabel>
                          <CardValue>{c.value}</CardValue>
                        </CardInner>
                      </Card>
                    ))}
                  </CardsRow>
                  <Slicer aria-label="model_name">
                    <SlicerHead>
                      model_name
                      <Chevron w={12} t={1} c="#605e5c" />
                    </SlicerHead>
                    <Option><Radio type="radio" name="model" defaultChecked />LogReg</Option>
                    <Option><Radio type="radio" name="model" />RF</Option>
                  </Slicer>
                  <TextVisual>
                    <TextClip>
                      <TextHeading>Cómo interpretar las métricas del modelo seleccionado:</TextHeading>
                      <Bullets>
                        <Bullet><span><b>ROC-AU</b>C: mide la capacidad de ordenar correctamente casos positivos frente a negativos en todos los umbrales.</span></Bullet>
                        <Bullets $nested>
                          <Bullet><b>0,80 = muy buen ranking; 0,70–0,80 = correcto; &lt;0,60 = mejorar.</b></Bullet>
                        </Bullets>
                        <Bullet><span><b>PR-AUC:</b> más informativa con clases minoritarias (como la rotación). Mide la calidad precisión–recobrado en umbrales útiles.</span></Bullet>
                        <Bullets $nested>
                          <Bullet><b>0,50 ya indica utilidad si la clase positiva es poco frecuente.</b></Bullet>
                        </Bullets>
                        <Bullet><span><b>F1 (óptimo)</b>: equilibrio entre Precisión y Recall en el umbral óptimo elegido para operar.</span></Bullet>
                        <Bullets $nested>
                          <Bullet><b>F1 <Thin>↑</Thin> cuando el umbral se ajusta al coste/beneficio de captar positivos sin generar demasiados falsos positivos.</b></Bullet>
                        </Bullets>
                        <Bullet><span><b>Umbral óptimo:</b> probabilidad a partir de la cual marcamos “riesgo”.</span></Bullet>
                        <Bullets $nested>
                          <Bullet><span>Umbral ↑ ⇒ menos alertas, más precisión y menos recall.</span></Bullet>
                          <Bullet><span>Umbral ↓ ⇒ más cobertura (recall), más falsos positivos.</span></Bullet>
                        </Bullets>
                      </Bullets>
                    </TextClip>
                    <ScrollThumb />
                  </TextVisual>
                </PageBody>
              </Page>
            </CanvasArea>
            <Pane $w={42}>
              <DoubleChevron />
              <PaneHead>
                <Svg s={15} h={16}>
                  <path d="M15 1V15L9 10H3L1 6H9Z" stroke="#323130" strokeWidth="1.500" strokeLinejoin="round" />
                </Svg>
                <PaneTitle>Filtros</PaneTitle>
              </PaneHead>
            </Pane>
          </CanvasRow>
          <PageTabs>
            <ViewSwitch>
              <ViewButton $active aria-label="Diseño de escritorio">
                <Svg s={24} h={26}>
                  <path d="M1 5H23V18H1ZM12 18V21M8 21.500H16" stroke="#605e5c" strokeWidth="1.600" />
                </Svg>
              </ViewButton>
              <ViewButton aria-label="Diseño móvil">
                <Svg s={18} h={26}>
                  <rect x="1.500" y="1.500" width="15" height="24" rx="1.500" stroke="#605e5c" strokeWidth="1.700" />
                  <path d="M7.500 22H10.500" stroke="#605e5c" strokeWidth="1.700" />
                </Svg>
              </ViewButton>
              <Arrow aria-label="Página anterior"><Svg s={6} h={12}><path d="M6 0V12L0 6Z" fill="#c8c6c4" /></Svg></Arrow>
              <Arrow aria-label="Página siguiente"><Svg s={6} h={12}><path d="M0 0V12L6 6Z" fill="#c8c6c4" /></Svg></Arrow>
            </ViewSwitch>
            <PageTab $w={161} $active>Resumen &amp; KPIs</PageTab>
            <PageTab $w={125}>Segmentos</PageTab>
            <PageTab $w={153}>Departamentos</PageTab>
            <PageTab $w={178}>Puestos (Job Rules)</PageTab>
            <PageTab $w={97}>Drivers</PageTab>
            <AddTab aria-label="Nueva página">
              <Svg s={12}><path d="M6 0V12M0 6H12" stroke="#fff" strokeWidth="2.600" /></Svg>
            </AddTab>
          </PageTabs>
        </Center>
        <Pane $w={44} $docked>
          <DoubleChevron />
          <PaneTitle>Visualizaciones</PaneTitle>
        </Pane>
        <Pane $w={43} $docked>
          <DoubleChevron />
          <PaneTitle>Datos</PaneTitle>
        </Pane>
      </Workspace>

      <StatusBar>
        Página 1 de 5
        <ZoomBox>
          <ZoomStep aria-label="Alejar">-</ZoomStep>
          <ZoomRange type="range" min={10} max={200} defaultValue={86} aria-label="Zoom" />
          <ZoomStep aria-label="Acercar">+</ZoomStep>
          <ZoomText>81 %</ZoomText>
          <FitButton aria-label="Ajustar a la página">
            <Svg s={20} h={16}>
              <rect x="0.500" y="1" width="19.500" height="14.500" stroke="#797775" strokeWidth="1.800" />
              <path d="M4 6.500V4H6.500M14 4H16.500V6.500M16.500 10V12.500H14M6.500 12.500H4V10" stroke="#605e5c" strokeWidth="1.300" />
            </Svg>
          </FitButton>
        </ZoomBox>
      </StatusBar>

      <Taskbar>
        <Dock>
          <DockButton aria-label="Inicio">
            <Svg s={29}>
              <defs>
                <linearGradient id="win" x1="0" y1="0" x2="29" y2="29" gradientUnits="userSpaceOnUse">
                  <stop offset="0" stopColor="#7df3ff" />
                  <stop offset="1" stopColor="#0a94ff" />
                </linearGradient>
              </defs>
              <path d="M0 0H14V14H0ZM15 0H29V14H15ZM0 15H14V29H0ZM15 15H29V29H15Z" fill="url(#win)" />
            </Svg>
          </DockButton>
          <SearchBox>
            <Svg s={18}>
              <circle cx="8" cy="8" r="7" stroke="#e6e6e8" strokeWidth="2" />
              <path d="M13 13L18 18" stroke="#e6e6e8" strokeWidth="2.200" />
            </Svg>
            <SearchInput placeholder="Búsqueda" aria-label="Búsqueda" />
          </SearchBox>
          {dock.map((d) => (
            <DockButton key={d.name} aria-label={d.name} $active={d.active}>
              <DockStack>
                {d.icon}
                {d.mark && <DockMark $w={d.mark[0]} $c={d.mark[1]} />}
              </DockStack>
            </DockButton>
          ))}
        </Dock>
        <Tray>
          <button aria-label="Iconos ocultos"><Chevron w={14} up t={1.8} /></button>
          <TrayIcons>
            <Svg s={20} h={16}>
              <g stroke="#fff" strokeWidth="1.500">
                <path d="M0.500 6C6 0 14 0 19.500 6M3.500 9C7.500 4.500 12.500 4.500 16.500 9M6.500 12C8.500 9.500 11.500 9.500 13.500 12" />
              </g>
              <circle cx="10" cy="13.500" r="1.700" fill="#fff" />
            </Svg>
            <Svg s={20} h={16}>
              <path d="M1 5.500H4L8.500 1V15L4 10.500H1ZM12.500 5L19 11.500M19 5L12.500 11.500" stroke="#fff" strokeWidth="1.400" strokeLinejoin="round" />
            </Svg>
            <Svg s={21} h={16}>
              <path d="M8 3H15Q17.500 3 17.500 5.500V12.500Q17.500 15 15 15H4Q1.500 15 1.500 12.500V8" stroke="#fff" strokeWidth="1.500" />
              <path d="M18.500 7Q21 7 21 9Q21 11 18.500 11Z" fill="#fff" />
              <path d="M4 -1L1 5H3.500L2.500 9L7 3.500H4.500L6 -1Z" fill="#fff" />
            </Svg>
          </TrayIcons>
          <Clock>
            <div>9:37</div>
            <div>06/09/2025</div>
          </Clock>
        </Tray>
      </Taskbar>
    </Shell>
  );
}
